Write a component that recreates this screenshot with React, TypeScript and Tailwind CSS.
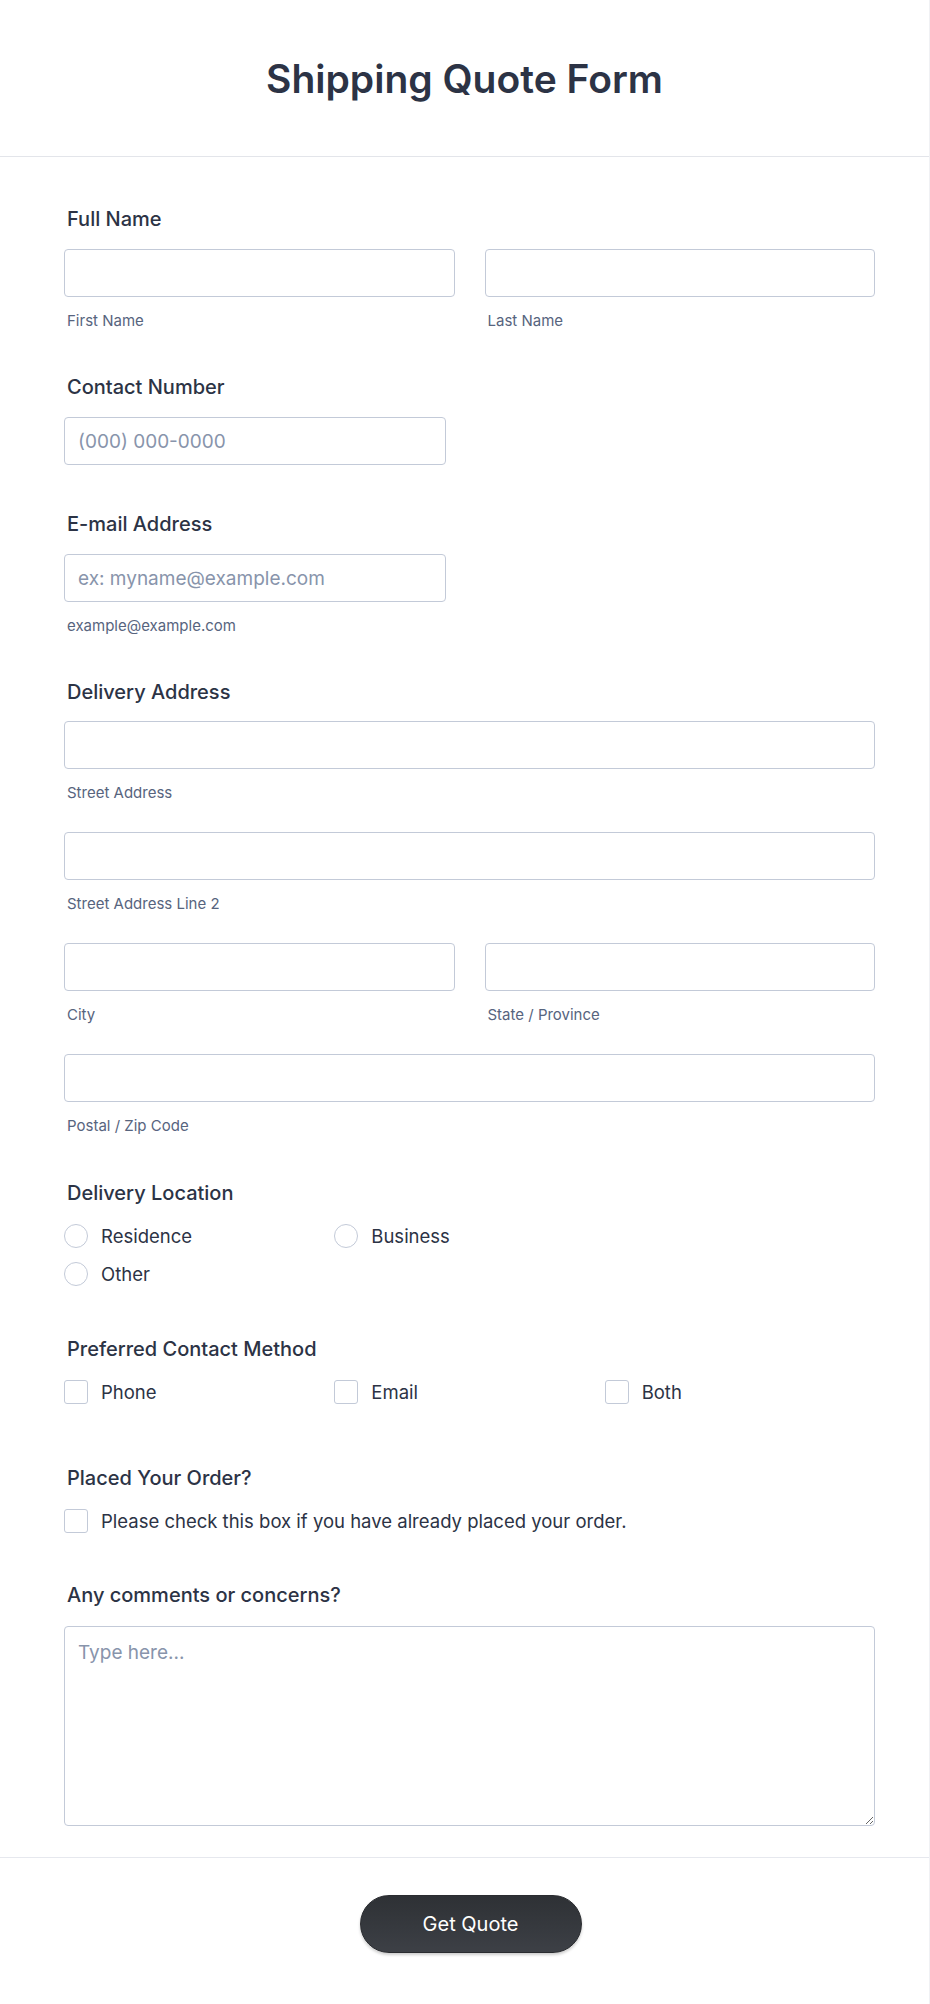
import React from 'react';

const Label = ({ children }: { children: React.ReactNode }) => (
  <div className="pl-[3px] text-[20px] leading-[24px] font-medium text-[#2c3345]">{children}</div>
);

const SubLabel = ({ children }: { children: React.ReactNode }) => (
  <div className="mt-[15px] pl-[3px] text-[15px] leading-[18px] text-[#57647e]">{children}</div>
);

const TextInput = ({ placeholder, className = '' }: { placeholder?: string; className?: string }) => (
  <input
    type="text"
    placeholder={placeholder}
    className={`block h-[48px] w-full rounded-[4px] border border-[#c3cad8] bg-white px-[13px] text-[19px] text-[#2c3345] outline-none placeholder:text-[#8894ab] ${className}`}
  />
);

const Radio = ({ label, className = '' }: { label: string; className?: string }) => (
  <label className={`flex items-center gap-[13px] ${className}`}>
    <span className="h-[24px] w-[24px] shrink-0 rounded-full border-[1.5px] border-[#c3cad8] bg-white" />
    <span className="text-[18.5px] leading-[24px] text-[#2c3345]">{label}</span>
  </label>
);

const Checkbox = ({ label }: { label: string }) => (
  <label className="flex items-center gap-[13px]">
    <span className="h-[24px] w-[24px] shrink-0 rounded-[3px] border-[1.5px] border-[#c3cad8] bg-white" />
    <span className="text-[18.5px] leading-[24px] text-[#2c3345]">{label}</span>
  </label>
);

export default function App() {
  return (
    <div className="min-h-screen w-full border-r border-[#f0f1f4] bg-white font-['Inter','Noto_Sans',sans-serif]">
      {/* Header */}
      <header className="flex h-[157px] items-center justify-center border-b border-[#e3e5ea]">
        <h1 className="text-[39px] font-semibold leading-none text-[#2c3345]">Shipping Quote Form</h1>
      </header>

      {/* Fields */}
      <main className="pl-[64px] pr-[54px] pt-[50px]">
        {/* Full Name */}
        <section>
          <Label>Full Name</Label>
          <div className="mt-[18px] grid grid-cols-2 gap-[30px]">
            <div>
              <TextInput />
              <SubLabel>First Name</SubLabel>
            </div>
            <div>
              <TextInput />
              <SubLabel>Last Name</SubLabel>
            </div>
          </div>
        </section>

        {/* Contact Number */}
        <section className="mt-[45px]">
          <Label>Contact Number</Label>
          <div className="mt-[18px] w-[382px]">
            <TextInput placeholder="(000) 000-0000" />
          </div>
        </section>

        {/* E-mail */}
        <section className="mt-[47px]">
          <Label>E-mail Address</Label>
          <div className="mt-[18px] w-[382px]">
            <TextInput placeholder="ex: myname@example.com" />
          </div>
          <SubLabel>example@example.com</SubLabel>
        </section>

        {/* Delivery Address */}
        <section className="mt-[45px]">
          <Label>Delivery Address</Label>
          <div className="mt-[17px]">
            <TextInput />
            <SubLabel>Street Address</SubLabel>
          </div>
          <div className="mt-[30px]">
            <TextInput />
            <SubLabel>Street Address Line 2</SubLabel>
          </div>
          <div className="mt-[30px] grid grid-cols-2 gap-[30px]">
            <div>
              <TextInput />
              <SubLabel>City</SubLabel>
            </div>
            <div>
              <TextInput />
              <SubLabel>State / Province</SubLabel>
            </div>
          </div>
          <div className="mt-[30px]">
            <TextInput />
            <SubLabel>Postal / Zip Code</SubLabel>
          </div>
        </section>

        {/* Delivery Location */}
        <section className="mt-[46px]">
          <Label>Delivery Location</Label>
          <div className="mt-[19px] grid grid-cols-3 gap-y-[14px]">
            <Radio label="Residence" />
            <Radio label="Business" />
            <Radio label="Other" className="col-start-1" />
          </div>
        </section>

        {/* Preferred Contact Method */}
        <section className="mt-[51px]">
          <Label>Preferred Contact Method</Label>
          <div className="mt-[19px] grid grid-cols-3">
            <Checkbox label="Phone" />
            <Checkbox label="Email" />
            <Checkbox label="Both" />
          </div>
        </section>

        {/* Placed Your Order */}
        <section className="mt-[62px]">
          <Label>Placed Your Order?</Label>
          <div className="mt-[19px]">
            <Checkbox label="Please check this box if you have already placed your order." />
          </div>
        </section>

        {/* Comments */}
        <section className="mt-[50px]">
          <Label>Any comments or concerns?</Label>
          <textarea
            placeholder="Type here..."
            className="mt-[19px] block h-[200px] w-full rounded-[4px] border border-[#c3cad8] bg-white px-[13px] py-[12px] text-[19px] leading-[28px] text-[#2c3345] outline-none placeholder:text-[#8894ab]"
          />
        </section>
      </main>

      {/* Submit */}
      <footer className="mt-[31px] flex justify-center border-t border-[#e6e8ee] pl-[66px] pr-[54px] pt-[37px] pb-[50px]">
        <button className="h-[58px] w-[222px] rounded-full border border-[#2a2c30] bg-gradient-to-b from-[#2e3135] to-[#3d4046] text-[20px] text-white shadow-[0_2px_3px_rgba(0,0,0,0.2)]">
          Get Quote
        </button>
      </footer>
    </div>
  );
}
